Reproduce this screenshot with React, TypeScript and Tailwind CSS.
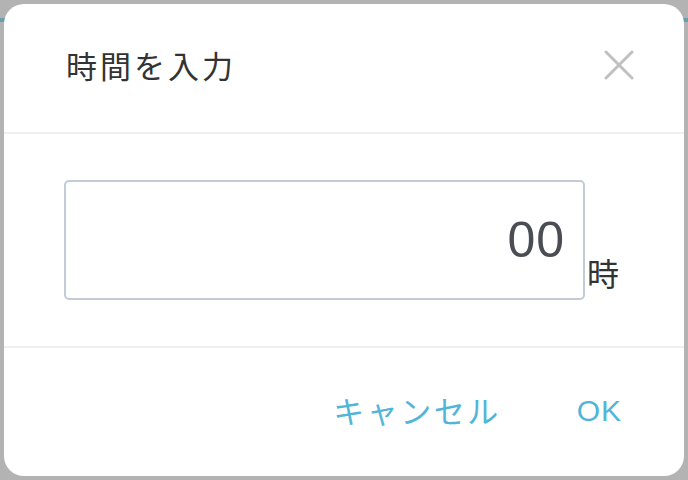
export default function App() {
    return (
        <div className="relative h-[480px] w-[688px] overflow-hidden bg-[#b3b3b3]">
            <div className="mt-[18px] h-[4px] w-full bg-[#6a9eaa]" />

            <div
                className="absolute inset-[4px] flex flex-col rounded-[20px] bg-white"
                style={{ fontFamily: '"Noto Sans CJK JP", "Noto Sans", sans-serif' }}
            >
                <div className="flex h-[128px] items-center justify-between pb-[6px] pl-[62px] pr-[50px]">
                    <h2 className="text-[31px] tracking-[3px] text-[#333333]">時間を入力</h2>
                    <svg width="30" height="30" viewBox="0 0 30 30" className="text-[#c0c0c0]">
                        <path d="M2 2 L28 28 M28 2 L2 28" stroke="currentColor" strokeWidth="3" strokeLinecap="round" />
                    </svg>
                </div>

                <div className="h-[2px] bg-[#efefef]" />

                <div className="flex h-[212px] items-start pl-[60px] pt-[46px]">
                    <div className="flex h-[120px] w-[521px] items-center justify-end rounded-[5px] border-2 border-[#c3ccd6] pr-[18px]">
                        <span
                            className="text-[50px] tracking-[1px] text-[#4a4e54]"
                            style={{ fontFamily: '"Liberation Sans", sans-serif' }}
                        >
                            00
                        </span>
                    </div>
                    <span className="mt-[68px] ml-[2px] text-[32px] text-[#333333]">時</span>
                </div>

                <div className="h-[2px] bg-[#efefef]" />

                <div className="flex flex-1 items-center justify-end gap-[76px] pr-[62px] pb-[4px]">
                    <button className="text-[31px] tracking-[2.5px] text-[#52b5d8]">キャンセル</button>
                    <button
                        className="text-[30px] tracking-[1px] text-[#52b5d8]"
                        style={{ fontFamily: '"Liberation Sans", sans-serif' }}
                    >
                        OK
                    </button>
                </div>
            </div>
        </div>
    );
}
